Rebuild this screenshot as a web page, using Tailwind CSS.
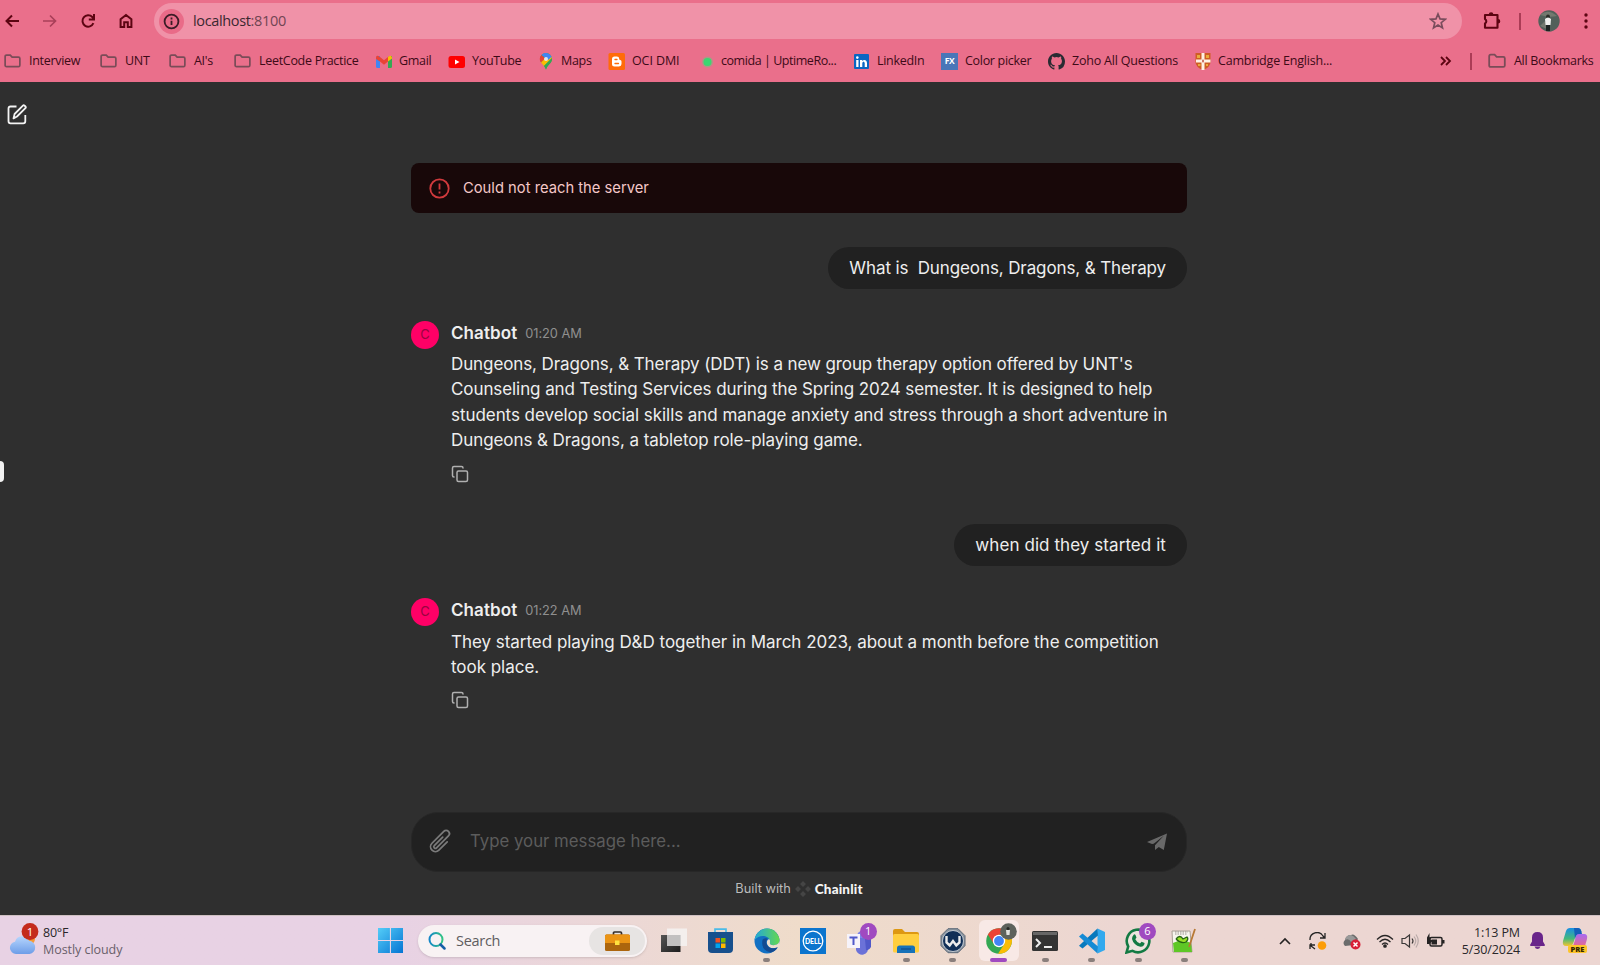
<!DOCTYPE html>
<html lang="en">
<head>
<meta charset="utf-8">
<title>Chatbot</title>
<script src="https://cdn.jsdelivr.net/npm/@tailwindcss/browser@4"></script>
</head>
<body class="w-[1600px] h-[965px] overflow-hidden flex flex-col bg-[#2f2f2f] font-['Inter',sans-serif] text-[#eee]">
<svg class="hidden">
  <symbol id="folder" viewBox="0 0 18 16"><path d="M1.2 3.2Q1.2 1.7 2.7 1.7H6.6L8.6 3.8H15.3Q16.8 3.8 16.8 5.3V12.4Q16.8 13.9 15.3 13.9H2.7Q1.2 13.9 1.2 12.4Z" fill="none" stroke="#7a4c58" stroke-width="1.8"/></symbol>
  <symbol id="copy" viewBox="0 0 24 24"><g fill="none" stroke="#b0b0b0" stroke-width="2" stroke-linecap="round" stroke-linejoin="round"><rect x="8" y="8" width="14" height="14" rx="2"/><path d="M4 16c-1.1 0-2-.9-2-2V4c0-1.100.9-2 2-2h10c1.100 0 2 .9 2 2"/></g></symbol>
</svg>

<header class="h-[82px] shrink-0 bg-[#ea6f8b] font-['Open_Sans',sans-serif] text-[#3d0a17]">
  <div class="h-[42px] flex items-center text-[#5c0512]">
    <svg class="ml-1 w-4 h-4" viewBox="0 0 16 16" fill="none" stroke="currentColor" stroke-width="2"><path d="M15 8H3M8 2.500 2.500 8 8 13.500"/></svg>
    <svg class="ml-[22px] w-4 h-4 text-[#a94059]" viewBox="0 0 16 16" fill="none" stroke="currentColor" stroke-width="1.700"><path d="M1 8h12M8 2.500 13.500 8 8 13.500"/></svg>
    <svg class="ml-[22px] w-4 h-4" viewBox="0 0 16 16" fill="none" stroke="currentColor" stroke-width="2"><path d="M13.400 10.200A5.700 5.700 0 1 1 12.300 4L14 5.700M14 1v5.400H8.800"/></svg>
    <svg class="ml-[22px] w-4 h-4" viewBox="0 0 16 16" fill="none" stroke="currentColor" stroke-width="2"><path d="M2.600 14V6.200L8 2l5.400 4.200V14H9.800V9.200H6.200V14Z"/></svg>
    <div class="ml-[20px] w-[1308px] h-9 rounded-full bg-[#f092a8] flex items-center text-[#3a2830]">
      <div class="ml-[5px] w-[25px] h-[25px] rounded-full bg-[#e96b88] flex items-center justify-center">
        <svg class="w-[17px] h-[17px]" viewBox="0 0 16 16" fill="none" stroke="#3c1c26" stroke-width="1.700"><circle cx="8" cy="8" r="6.500"/><path d="M8 7.200v4M8 4.300v1.700"/></svg>
      </div>
      <span class="ml-[9px] text-[14.5px] tracking-[-0.35px]">localhost<span class="text-[#714553]">:8100</span></span>
      <svg class="ml-auto mr-[15px] w-[18px] h-[18px]" viewBox="0 0 18 18" fill="none" stroke="#7a4c5c" stroke-width="1.700"><path d="m9 2 2 4.900 5.200.4-4 3.400 1.300 5.200L9 13.100l-4.500 2.800 1.300-5.200-4-3.400L7 6.900Z"/></svg>
    </div>
    <svg class="ml-[20px] w-5 h-5" viewBox="0 0 20 20"><path d="M3 4h12.500v12.800H3v-4.300a2.500 2.500 0 0 0 0-4.400Z" fill="none" stroke="currentColor" stroke-width="2.100" stroke-linejoin="round"/><path d="M6.800 3.500a2.300 2.300 0 0 1 4.600 0zM16 8a2.300 2.300 0 0 1 0 4.600z" fill="currentColor"/></svg>
    <div class="ml-[17px] w-0.5 h-[17px] bg-[#ab3c56]"></div>
    <svg class="ml-[17px] w-[22px] h-[22px]" viewBox="0 0 22 22"><circle cx="11" cy="11" r="10.700" fill="#52605a"/><path d="M2 5q8-7 17 1-8 2-17-1M2 16l5-5 2 8z" fill="#73796f"/><circle cx="10" cy="6.500" r="1.900" fill="#282b26"/><path d="M7 9q3-3 6 0l-.5 6h-5z" fill="#efefed"/><path d="M8 15h4v6H8z" fill="#1d2422"/></svg>
    <svg class="ml-[17px] w-5 h-[18px]" viewBox="0 0 20 18" fill="currentColor"><circle cx="9" cy="3" r="1.700"/><circle cx="9" cy="9" r="1.700"/><circle cx="9" cy="15" r="1.700"/></svg>
  </div>
  <div class="h-[38px] pl-1 flex items-center text-[12.5px] tracking-[-0.3px] whitespace-nowrap">
    <div class="w-[96px] flex items-center gap-2"><svg class="w-[17px] h-4"><use href="#folder"/></svg>Interview</div>
    <div class="w-[69px] flex items-center gap-2"><svg class="w-[17px] h-4"><use href="#folder"/></svg>UNT</div>
    <div class="w-[65px] flex items-center gap-2"><svg class="w-[17px] h-4"><use href="#folder"/></svg>AI's</div>
    <div class="w-[141px] flex items-center gap-2"><svg class="w-[17px] h-4"><use href="#folder"/></svg>LeetCode Practice</div>
    <div class="w-[72px] flex items-center gap-[7px]"><svg class="w-[17px] h-[17px]" viewBox="0 0 17 17"><path d="M2 3h3v12H2.500Q1 15 1 13.500V5Z" fill="#4285f4"/><path d="M14 3h3v10.500q0 1.500-1.500 1.500H13V5Z" fill="#34a853"/><path d="M1 5Q1 1 5 4L9 7.300 13 4v4.500L9 11.800 5 8.500 1 6Z" fill="#ea4335"/><path d="M13 4q4-3 4 1.500L13 8.500Z" fill="#fbbc04"/></svg>Gmail</div>
    <div class="w-[89px] flex items-center gap-2"><svg class="w-[18px] h-[17px] -mr-px" viewBox="0 0 18 17"><rect x="1.500" y="3" width="16.500" height="12" rx="2.500" fill="#f00"/><path d="m8 6.500 4.500 2.500L8 11.500z" fill="#fff"/></svg>YouTube</div>
    <div class="w-[71px] flex items-center gap-2"><svg class="w-[17px] h-[18px]" viewBox="0 0 17 18"><path d="M4 7a6 6 0 0 1 12 0c0 4-4.500 5.500-6 10.500C8.500 12 4 11 4 7" fill="#34a853"/><path d="M5.500 3 10 7 5 10.500A6 6 0 0 1 5.500 3" fill="#ea4335"/><path d="m5 10.500 8-8A6 6 0 0 1 16 6L8 14Q6.500 12 5 10.500" fill="#fbbc04"/><path d="M5.500 3A6 6 0 0 1 15.600 5L12 8Z" fill="#4285f4"/><path d="M16 6q0 4-3 6.500-2 2-3 5-1-2.500-2-3.500Z" fill="#34a853"/><circle cx="10" cy="7" r="2" fill="#dfe8ef"/></svg>Maps</div>
    <div class="w-[89px] flex items-center gap-2"><svg class="w-[18px] h-[17px] -mr-px" viewBox="0 0 18 17"><rect x="1.500" width="16.500" height="17" rx="1.500" fill="#ff6b0a"/><path d="M5 6q0-2.500 2.500-2.500h2.300q2.400 0 2.400 2.300 0 1.200 1 1.200 1.300 0 1.300 1.500v2.600q0 2.400-2.500 2.400H7.500Q5 13.500 5 11Z" fill="#fff"/><path d="M8 6.500h2M8 10.500h3.500" stroke="#ff6b0a" stroke-width="1.300" stroke-linecap="round"/></svg><span class="tracking-[-0.1px]">OCI DMI</span></div>
    <div class="w-[156px] flex items-center gap-2"><svg class="w-[17px] h-[17px]" viewBox="0 0 17 17"><circle cx="11.500" cy="9" r="5.500" fill="#64c982" opacity=".45"/><circle cx="11.500" cy="9" r="4" fill="#3bd671"/></svg><span class="tracking-[-0.45px]">comida | UptimeRo...</span></div>
    <div class="w-[88px] flex items-center gap-2"><svg class="w-[17px] h-[17px]" viewBox="0 0 17 17"><rect x="2" y="1" width="15" height="15" rx="1" fill="#0a66c2"/><path d="M4.200 7h2.300v7H4.200zM8 7h2.200v1.100c1.500-2 4.800-1.500 4.800 2V14h-2.300v-3.700c0-2.200-2.400-2-2.400 0V14H8z" fill="#fff"/><circle cx="5.300" cy="4.600" r="1.300" fill="#fff"/></svg>LinkedIn</div>
    <div class="w-[107px] flex items-center gap-[7px]"><div class="ml-px w-[17px] h-[17px] bg-[#4a76b8] text-white text-[8.5px] font-bold flex items-center justify-center">FX</div>Color picker</div>
    <div class="w-[147px] flex items-center gap-[7px]"><svg class="ml-px w-[17px] h-[17px]" viewBox="0 0 16 16" fill="#292b32"><path d="M8 0C3.580 0 0 3.580 0 8c0 3.540 2.290 6.530 5.470 7.590.4.070.55-.17.55-.38 0-.19-.01-.82-.01-1.490-2.010.37-2.530-.49-2.690-.94-.09-.23-.48-.94-.82-1.130-.28-.15-.68-.52-.01-.53.63-.01 1.080.58 1.230.82.72 1.210 1.870.87 2.330.66.070-.52.28-.87.51-1.070-1.780-.2-3.640-.89-3.640-3.950 0-.87.31-1.590.82-2.150-.08-.2-.36-1.020.08-2.120 0 0 .67-.21 2.200.82a7.400 7.400 0 0 1 4 0c1.530-1.040 2.200-.82 2.200-.82.44 1.100.16 1.920.08 2.120.51.56.82 1.270.82 2.150 0 3.070-1.870 3.750-3.650 3.950.29.25.54.73.54 1.480 0 1.070-.01 1.930-.01 2.200 0 .21.15.46.55.38A8.010 8.010 0 0 0 16 8c0-4.420-3.580-8-8-8"/></svg><span class="tracking-[-0.2px]">Zoho All Questions</span></div>
    <div class="flex items-center gap-[7px]"><svg class="w-[17px] h-[18px]" viewBox="0 0 17 18"><path d="M1.500 1h15v9q0 5-7.500 8-7.500-3-7.500-8Z" fill="#cf5c25"/><path d="M7.500 1h3v17h-3zM2 7.500h14.500v3H2z" fill="#fff1e5"/><path d="M3 3h3v3H3zM12 3h3v3h-3zM4 12h2.500v2H4zM12 12h2v2h-2z" fill="#e8ac3c"/><path d="M9 7.500v3M8 9h2" stroke="#bd4c3d"/></svg><span class="tracking-[-0.2px]">Cambridge English...</span></div>
    <svg class="ml-auto w-3 h-3" viewBox="0 0 12 12" fill="none" stroke="#5c0512" stroke-width="1.800"><path d="m1 2 4 4-4 4M6 2l4 4-4 4"/></svg>
    <div class="ml-[18px] w-0.5 h-[17px] bg-[#ab3c56]"></div>
    <div class="ml-[16px] w-[112px] flex items-center gap-2"><svg class="w-[18px] h-4"><use href="#folder"/></svg>All Bookmarks</div>
  </div>
</header>

<main class="h-[833px] shrink-0 flex">
  <aside class="w-[411px] h-full flex flex-col">
    <svg class="ml-1.5 mt-[21px] w-[22px] h-[22px]" viewBox="0 0 22 22" fill="none" stroke="#f4f4f4" stroke-width="1.800" stroke-linejoin="round"><path d="M10.500 3.500H4.500Q2.500 3.500 2.500 5.500v12.800q0 2 2 2h12.800q2 0 2-2V12"/><path d="M7.500 15.400 8.600 11l8.300-8.300q.8-.8 1.700 0l.8.800q.9.900 0 1.700L11 13.500Z"/></svg>
    <div class="mt-[336px] w-1 h-[21px] rounded-r-sm bg-[#f2f2f2]"></div>
  </aside>
  <section class="w-[776px] flex flex-col">
    <div class="mt-[81px] h-[50px] shrink-0 rounded-lg bg-[#180809] flex items-center pl-[18px] text-[14.75px] text-[#f4c7c7]">
      <svg class="w-[21px] h-[21px] mr-[13px]" viewBox="0 0 21 21" fill="none" stroke="#d03a3d" stroke-width="1.800"><circle cx="10.500" cy="10.500" r="9.200"/><path d="M10.500 5.500v6M10.500 13.500v2"/></svg>
      <span class="pt-px">Could not reach the server</span>
    </div>
    <div class="mt-[34px] h-[42px] shrink-0 self-end rounded-full bg-[#212121] px-[21px] pt-0.5 flex items-center whitespace-pre text-[17px] tracking-[-0.11px]">What is  Dungeons, Dragons, &amp; Therapy</div>
    <article class="mt-8 h-[203px] shrink-0 flex">
      <div class="w-7 h-7 shrink-0 rounded-full bg-[#ff0066] text-[#98053f] text-[13px] flex items-center justify-center">C</div>
      <div class="ml-3">
        <div class="h-6 pt-0.5 flex items-center"><b class="text-[17px] font-semibold tracking-[0.08px]">Chatbot</b><span class="ml-2 text-[12.8px] tracking-[-0.05px] text-[#8f8f8f]">01:20 AM</span></div>
        <p class="mt-[7px] text-[17px] leading-[25.4px] whitespace-nowrap"><span class="tracking-[-0.1px]">Dungeons, Dragons, &amp; Therapy (DDT) is a new group therapy option offered by UNT's</span><br><span class="tracking-[-0.085px]">Counseling and Testing Services during the Spring 2024 semester. It is designed to help</span><br><span class="tracking-[-0.055px]">students develop social skills and manage anxiety and stress through a short adventure in</span><br><span class="tracking-[-0.075px]">Dungeons &amp; Dragons, a tabletop role-playing game.</span></p>
        <svg class="mt-[11px] w-[18px] h-[18px]"><use href="#copy"/></svg>
      </div>
    </article>
    <div class="h-[42px] shrink-0 self-end rounded-full bg-[#212121] px-[21px] pt-0.5 flex items-center text-[17px] tracking-[0.07px]">when did they started it</div>
    <article class="mt-8 h-[214px] shrink-0 flex">
      <div class="w-7 h-7 shrink-0 rounded-full bg-[#ff0066] text-[#98053f] text-[13px] flex items-center justify-center">C</div>
      <div class="ml-3">
        <div class="h-6 pt-0.5 flex items-center"><b class="text-[17px] font-semibold tracking-[0.08px]">Chatbot</b><span class="ml-2 text-[12.8px] tracking-[-0.05px] text-[#8f8f8f]">01:22 AM</span></div>
        <p class="mt-2 text-[17px] leading-[25.4px] tracking-[-0.03px] whitespace-nowrap">They started playing D&amp;D together in March 2023, about a month before the competition<br>took place.</p>
        <svg class="mt-[10px] w-[18px] h-[18px]"><use href="#copy"/></svg>
      </div>
    </article>
    <div class="h-[60px] shrink-0 rounded-[27px] border border-[#272727] bg-[#212121] flex items-center text-[16.8px] text-[#5c5c5c]">
      <svg class="ml-[14px] mb-0.5 w-[26px] h-[26px]" viewBox="0 0 24 24" fill="none" stroke="#7b7b7b" stroke-width="1.600" stroke-linecap="round" stroke-linejoin="round"><path d="m18.375 12.739-7.693 7.693a4.500 4.500 0 0 1-6.364-6.364l10.940-10.940A3 3 0 1 1 19.500 7.372L8.552 18.320m.009-.01-.01.01m5.699-9.941-7.810 7.810a1.500 1.500 0 0 0 2.112 2.130" transform="translate(1.200 0)"/></svg>
      <span class="ml-[18px]">Type your message here...</span>
      <svg class="ml-auto mr-[19px] mb-px w-5 h-[18px]" viewBox="0 0 20 18" fill="#696969"><path d="M20 .5 0 9l4.300 1.800q2 .4 3.700-1.100L17 2.500 8 12.200V17l3.800-3 5 3Z"/></svg>
    </div>
    <div class="mt-[7px] h-5 flex items-center justify-center text-[12.8px] text-[#bcbcbc]">Built with
      <svg class="ml-1 mr-1 w-4 h-4" viewBox="0 0 16 16" fill="#454545"><path d="m8 0 3 3-3 3-3-3zM8 10l3 3-3 3-3-3zM3 5l3 3-3 3-3-3zM13 5l3 3-3 3-3-3z"/></svg>
      <b class="font-['Lato',sans-serif] font-black text-[13.5px] tracking-[0.15px] text-[#f5f5f5]">Chainlit</b>
    </div>
  </section>
</main>

<footer class="h-[50px] shrink-0 flex items-center border-t border-[#cfc0c2] bg-linear-to-r from-[#e8d2e4] from-25% via-[#efdcca] via-50% to-[#ecd6d2] to-70% font-['Open_Sans',sans-serif] text-[#29272a]">
  <div class="w-[378px] flex items-center text-[12.5px] leading-[17px] tracking-[-0.25px]">
    <svg class="ml-[9px] w-8 h-8 mr-0.5 mb-1" viewBox="0 0 32 32"><defs><linearGradient id="cl" x2="0" y2="1"><stop stop-color="#b7d6fd"/><stop offset="1" stop-color="#6d9de8"/></linearGradient></defs><circle cx="20" cy="16" r="6" fill="#f69a36"/><path d="M7 31a6.200 6.200 0 0 1-1-12.300 7.500 7.500 0 0 1 14-1 6.700 6.700 0 0 1 .5 13.300Z" fill="url(#cl)"/><circle cx="21" cy="8.500" r="8.400" fill="#c42b1c"/><text x="21" y="12.500" text-anchor="middle" font-family="Open Sans" font-size="11.500" fill="#fff">1</text></svg>
    <div>80°F<br><span class="text-[#69606a] tracking-[-0.05px]">Mostly cloudy</span></div>
  </div>
  <svg class="w-[25px] h-[25px]" viewBox="0 0 25 25"><defs><linearGradient id="wn" x2="1" y2="1"><stop stop-color="#54cdf8"/><stop offset="1" stop-color="#0574d3"/></linearGradient></defs><path d="M0 0h11.900v11.900H0zM13 0h12v11.900H13zM0 13h11.900v12H0zM13 13h12v12H13z" fill="url(#wn)"/></svg>
  <div class="ml-[15px] w-[229px] h-8 rounded-full bg-[#f8f2f3] shadow-sm flex items-center text-[14.5px] tracking-[-0.3px] text-[#605d60]">
    <svg class="ml-[10px] w-[18px] h-[18px]" viewBox="0 0 18 18" fill="none" stroke-linecap="round"><defs><linearGradient id="se"><stop stop-color="#1487c7"/><stop offset="1" stop-color="#31c484"/></linearGradient></defs><circle cx="8" cy="7.500" r="6.500" stroke="url(#se)" stroke-width="2"/><path d="m12.500 12.500 4 4" stroke="#155fa8" stroke-width="2.500"/></svg>
    <span class="ml-[10px]">Search</span>
    <div class="ml-auto mr-0.5 w-[56px] h-7 rounded-full bg-[#e7e4e3] flex items-center justify-center"><svg class="w-[25px] h-5" viewBox="0 0 25 20"><path d="M8.500 4V2q0-1 1-1h6q1 0 1 1v2" fill="none" stroke="#352d29" stroke-width="1.700"/><rect y="3.500" width="25" height="16.500" rx="1.500" fill="#ac650d"/><path d="M0 5q0-1.500 1.500-1.500h22Q25 3.500 25 5v7H0Z" fill="#eb9415"/><rect x="10" y="9.500" width="4.500" height="4.500" fill="#ffe13e"/></svg></div>
  </div>
  <div class="ml-[4px] grid grid-cols-[repeat(12,46.4px)] h-full">
    <div class="flex items-center justify-center"><svg class="w-[26px] h-[26px]" viewBox="0 0 26 26"><defs><linearGradient id="tv" x2="1" y2="1"><stop stop-color="#555"/><stop offset="1" stop-color="#1d1d1d"/></linearGradient></defs><path d="M0 7h19.500v17H0z" fill="url(#tv)"/><path d="M6 .5h20V18H6z" fill="#f5f2f2" opacity=".85"/><path d="M6 7h13.500v11H6z" fill="#b8b6b7" opacity=".7"/></svg></div>
    <div class="flex items-center justify-center"><svg class="w-[25px] h-[26px]" viewBox="0 0 25 26"><path d="M7 5V1.200h11V5" fill="none" stroke="#4abbe8" stroke-width="1.700"/><path d="M0 4h25v17q0 4-4 4H4q-4 0-4-4Z" fill="#17508d"/><path d="M7.500 10h4.500v4.500H7.500z" fill="#f25022"/><path d="M13 10h4.500v4.500H13z" fill="#7fba00"/><path d="M7.500 15.500H12V20H7.500z" fill="#00a4ef"/><path d="M13 15.500h4.500V20H13z" fill="#ffb900"/></svg></div>
    <div class="relative flex items-center justify-center"><svg class="w-[26px] h-[26px]" viewBox="0 0 26 26"><defs><linearGradient id="eg" x2="1"><stop stop-color="#23a8d8"/><stop offset="1" stop-color="#63d850"/></linearGradient></defs><circle cx="13" cy="13" r="12.500" fill="#1270c3"/><path d="M.6 12A12.500 12.500 0 0 1 25.500 12c.3 5-5.500 6-9 4.500-2-1 0-2-.5-4C14.500 7 5 6 .6 12" fill="url(#eg)"/><path d="M16.500 16.500c3 1.500 9 .5 9-4.500v6q-.5 1-2 1.500-8 2.500-10.500-3.500-1-3.500 2-5 1.500 1 1 3-.5 1.500.5 2.500" fill="#efdfce"/><path d="M8.500 12q-2 10 8 12.500 5-1 7-5-9 2.500-11-4-.5-3 1-5-4-1-5 1.500" fill="#154b91"/></svg><i class="absolute bottom-[3px] w-[7px] h-1 rounded-full bg-[#8a7f7c]"></i></div>
    <div class="flex items-center justify-center"><svg class="w-[26px] h-[26px]" viewBox="0 0 26 26"><path d="M0 0h26v26H0z" fill="#0b75ce"/><circle cx="13" cy="13" r="9.800" fill="none" stroke="#fff" stroke-width="1.300"/><text x="13" y="15.500" text-anchor="middle" font-family="Lato" font-weight="900" font-size="7" textLength="16" lengthAdjust="spacingAndGlyphs" fill="#fff">DELL</text></svg></div>
    <div class="relative flex items-center justify-center"><svg class="w-[30px] h-[30px]" viewBox="0 0 30 30"><circle cx="17" cy="10" r="5" fill="#7b83eb"/><path d="M11 12h12v9a6 6 0 0 1-12 3Z" fill="#6b72d8"/><path d="M20 13h6v8q-2 4-5 3Z" fill="#5059c9"/><path d="M2 8h13v14H2z" fill="#f6f3fa"/><path d="M4.500 11.500h8M8.500 11.500v7.500" stroke="#5059c9" stroke-width="2"/></svg><span class="absolute left-[23px] top-[7px] w-[17px] h-[17px] rounded-full bg-[#a04ac0] text-white text-[11px] flex items-center justify-center">1</span></div>
    <div class="relative flex items-center justify-center"><svg class="w-[26px] h-[24px]" viewBox="0 0 26 24"><path d="M0 2q0-2 2-2h7l3 3h12q2 0 2 2v5H0Z" fill="#dd9812"/><rect y="5" width="26" height="18.500" rx="1.500" fill="#ffce3e"/><path d="M4 24v-5q0-2.500 2.500-2.500h13Q22 16.500 22 19v5Z" fill="#1672b9"/><path d="M8 20h10" stroke="#105292" stroke-width="1.500"/></svg><i class="absolute bottom-[3px] w-[7px] h-1 rounded-full bg-[#8a7f7c]"></i></div>
    <div class="relative flex items-center justify-center"><svg class="w-[26px] h-[26px]" viewBox="0 0 26 26"><path d="m8 .7 10 0 7 7v10l-7 7H8l-7-7v-10Z" fill="#8b949e" stroke="#5d6978" stroke-width="1"/><circle cx="13" cy="13" r="10.500" fill="#112f57" stroke="#dfe3e7" stroke-width=".8"/><path d="M6.500 8v6.500l3.200 3 3.300-4.500 3.300 4.500 3.200-3V8" fill="none" stroke="#ececec" stroke-width="2.400"/></svg><i class="absolute bottom-[3px] w-[7px] h-1 rounded-full bg-[#8a7f7c]"></i></div>
    <div class="relative flex items-center justify-center"><div class="w-10 h-[41px] rounded-md bg-[#f8e9e6] flex items-center justify-center"><svg class="w-[26px] h-[26px]" viewBox="0 0 26 26"><circle cx="13" cy="13" r="12.800" fill="#34a853"/><path d="M1.900 6.600A12.800 12.800 0 0 1 24.100 6.600H13L7.600 15.500Z" fill="#ea4335"/><path d="M24.100 6.600A12.800 12.800 0 0 1 12 25.800l6.300-9.700L16.500 6.600Z" fill="#fbbc04"/><circle cx="13" cy="13" r="6.200" fill="#fff"/><circle cx="13" cy="13" r="4.900" fill="#4285f4"/></svg></div><svg class="absolute left-[24px] top-[7px] w-[17px] h-[17px]" viewBox="0 0 17 17"><circle cx="8.500" cy="8.500" r="8.300" fill="#5d625c"/><circle cx="8" cy="5.500" r="1.500" fill="#252825"/><path d="M6 7h4l-.5 5h-3z" fill="#e2e2e0"/></svg><i class="absolute bottom-[3px] w-[17px] h-1 rounded-full bg-[#a04ac0]"></i></div>
    <div class="relative flex items-center justify-center"><svg class="w-[26px] h-[20px]" viewBox="0 0 26 20"><rect width="26" height="20" rx="1.500" fill="#333"/><path d="M1 1h24v3H1z" fill="#666"/><path d="m4 8 4 4-4 4" fill="none" stroke="#eee" stroke-width="2"/><path d="M12 16h8" stroke="#eee" stroke-width="2"/></svg><i class="absolute bottom-[3px] w-[7px] h-1 rounded-full bg-[#8a7f7c]"></i></div>
    <div class="relative flex items-center justify-center"><svg class="w-[26px] h-[26px]" viewBox="0 0 26 26"><path d="M18.500.5 26 4v18l-7.500 3.500Z" fill="#32a9ee"/><path d="M18.500.5 19 7.500 3.500 20.500 0 17.700Z" fill="#0879bd"/><path d="M0 8.500 3.500 5.500 19 18.500l-.5 7Z" fill="#168bd5"/></svg><i class="absolute bottom-[3px] w-[7px] h-1 rounded-full bg-[#8a7f7c]"></i></div>
    <div class="relative flex items-center justify-center"><svg class="w-[26px] h-[26px]" viewBox="0 0 26 26"><path d="m1.500 24.500 1.700-6A11.300 11.300 0 1 1 7.500 22.800Z" fill="#eee4de" stroke="#137a43" stroke-width="2.600"/><path d="M8.500 7q1-1.500 2 0l1 2.500-1.200 1.700q1.500 3 4.700 4.300l1.600-1.800 3 1.400q-.5 4-4.300 3.700Q8.500 17 7 11q0-2.700 1.500-4" fill="#137a43"/></svg><span class="absolute left-[24px] top-[7px] w-[17px] h-[17px] rounded-full bg-[#a04ac0] text-white text-[11px] flex items-center justify-center">6</span><i class="absolute bottom-[3px] w-[7px] h-1 rounded-full bg-[#8a7f7c]"></i></div>
    <div class="relative flex items-center justify-center"><svg class="w-[26px] h-[26px]" viewBox="0 0 26 26"><path d="M1 3h18l2 21H2Z" fill="#f7f5ed" stroke="#aaa094"/><path d="M2 15q9-5 18 0l1 9H3Z" fill="#5fc726"/><path d="M5 11q4-5 7 0l4-2q2 2-1 5-5 2-10-3" fill="#98df27" stroke="#256414" stroke-width="1.300"/><path d="m18 19 6-18" stroke="#b87935" stroke-width="1.800"/><path d="M4 4h13M4 6h12" stroke="#97928d" stroke-dasharray="1.500 1"/></svg><i class="absolute bottom-[3px] w-[7px] h-1 rounded-full bg-[#8a7f7c]"></i></div>
  </div>
  <div class="ml-auto w-[321px] flex items-center">
    <svg class="w-3 h-2" viewBox="0 0 12 8" fill="none" stroke="#252323" stroke-width="1.600"><path d="m1 7 5-5 5 5"/></svg>
    <svg class="ml-[18px] w-[18px] h-[18px]" viewBox="0 0 18 18" fill="none" stroke="#242424" stroke-width="1.300"><path d="M1 8A7 7 0 0 1 14 4l2 2M16 1v5h-5M6 17l-4-3v-3M1 17v-4h5"/><circle cx="13" cy="13.500" r="4.300" fill="#fc9d08" stroke="none"/></svg>
    <svg class="ml-4 w-[18px] h-[18px]" viewBox="0 0 18 18"><path d="M2 14Q-1 11 2 8 3 3 8 3q3-2 7 4l-4 6Z" fill="#6b6c6c"/><path d="M2 8q4-2 6 2l5-3q-2-3-5-4-5 0-6 5" fill="#999"/><circle cx="12.500" cy="12.500" r="5" fill="#d81f37"/><path d="m10.500 10.500 4 4m0-4-4 4" stroke="#fff" stroke-width="1.500"/></svg>
    <svg class="ml-[15px] w-[18px] h-[14px]" viewBox="0 0 18 14" fill="none" stroke="#282626" stroke-width="1.300"><path d="M1 5.500q8-8 16 0M3.500 8q5.500-5.500 11 0M6 10.500q3-3 6 0"/><circle cx="9" cy="12" r="1.200" fill="#282626"/></svg>
    <svg class="ml-[7px] w-[18px] h-[16px]" viewBox="0 0 18 16" fill="none" stroke="#3a3737" stroke-width="1.200"><path d="M1 5.500h3L8.500 2v12L4 10.500H1Z"/><path d="M11 5.500q2 2.500 0 5"/><path d="M13 3.500q3.500 4.500 0 9M15 1.500q4.500 6.500 0 13" stroke="#b9aaa9"/></svg>
    <svg class="ml-[8px] w-[18px] h-[16px]" viewBox="0 0 18 16"><rect x="3" y="4.500" width="12" height="8.500" rx="1.500" fill="none" stroke="#252323" stroke-width="1.500"/><path d="M4.500 6.500H10v5H4.500zM15 7h2.500v3.500H15zM2.500 0v5H0l4-1-1 3h3L2.500 11H0V4.500z" fill="#252323"/></svg>
    <div class="w-[75px] text-right text-[12.5px] leading-[17px] tracking-[-0.1px]">1:13 PM<br>5/30/2024</div>
    <svg class="ml-[10px] w-[15px] h-[17px]" viewBox="0 0 15 17" fill="#69258a"><path d="M7.500 0Q13 0 13 5.500v4l2 3.500q0 1-1 1H1q-1 0-1-1l2-3.500v-4Q2 0 7.500 0M4.500 14.500h6q-1 2.500-3 2.500t-3-2.500"/></svg>
    <svg class="ml-[17px] w-[27px] h-[27px]" viewBox="0 0 27 27"><defs><linearGradient id="ca" x2="0" y2="1"><stop stop-color="#188ee4"/><stop offset=".6" stop-color="#45b97a"/><stop offset="1" stop-color="#f4c42f"/></linearGradient><linearGradient id="cb" x2="0" y2="1"><stop stop-color="#a66af3"/><stop offset="1" stop-color="#f36a7a"/></linearGradient></defs><path d="M8 1h8q3 0 3.500 4L14 8l-3 9q-1 2-4 2H4q-4 0-3-5L4 4q1-3 4-3" fill="url(#ca)"/><path d="M16 7h6q4 0 3 5l-2 7q-1 3-4 3h-9l3-9q1-6 3-6" fill="url(#cb)"/><path d="M12 1h4q3 0 4 6h-3q-3 0-4 5Z" fill="#145fb9"/><rect x="6" y="18" width="19" height="8" rx="2" fill="#fdc52a"/><text x="15.500" y="24.800" text-anchor="middle" font-family="Open Sans" font-size="7.500" font-weight="800" fill="#332700">PRE</text></svg>
  </div>
</footer>
</body>
</html>
